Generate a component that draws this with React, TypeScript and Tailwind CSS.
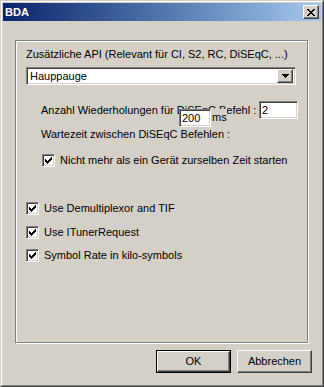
import React from 'react';

const raised =
  'border border-t-white border-l-white border-b-[#404040] border-r-[#404040] shadow-[inset_-1px_-1px_0_#808080]';
const sunken =
  'border border-t-[#808080] border-l-[#808080] border-b-white border-r-white shadow-[inset_1px_1px_0_#404040,inset_-1px_-1px_0_#d4d0c8]';

// pixel bitmaps for the classic glyphs
const checkRows = ['......#', '.....##', '#...###', '##.###.', '#####..', '.###...', '..#....'];
const closeRows = ['##....##', '.##..##.', '..####..', '...##...', '..####..', '.##..##.', '##....##'];

function Bitmap({ rows }: { rows: string[] }) {
  const w = rows[0].length;
  const h = rows.length;
  return (
    <svg width={w} height={h} viewBox={`0 0 ${w} ${h}`} shapeRendering="crispEdges">
      {rows.map((r, y) =>
        r.split('').map((c, x) => (c === '#' ? <rect key={`${x}-${y}`} x={x} y={y} width="1" height="1" fill="#000" /> : null))
      )}
    </svg>
  );
}

function CheckBox({ label, className = '' }: { label: string; className?: string }) {
  return (
    <div className={`flex items-center h-[13px] ${className}`}>
      <div className={`w-[13px] h-[13px] bg-white shrink-0 flex items-center justify-center ${sunken}`}>
        <Bitmap rows={checkRows} />
      </div>
      <span className="ml-[5px] leading-[13px] whitespace-nowrap">{label}</span>
    </div>
  );
}

function Button({ label, isDefault = false }: { label: string; isDefault?: boolean }) {
  const inner = (
    <div className={`w-full h-full flex items-center justify-center ${raised}`}>
      <span className="leading-[13px]">{label}</span>
    </div>
  );
  if (isDefault) {
    return <div className="w-[75px] h-[23px] border border-black">{inner}</div>;
  }
  return <div className="w-[75px] h-[23px]">{inner}</div>;
}

export default function App() {
  return (
    <div
      className="w-[324px] h-[387px] bg-[#d4d0c8] text-black text-[11px] flex flex-col border border-t-[#d4d0c8] border-l-[#d4d0c8] border-b-[#404040] border-r-[#404040]"
      style={{ fontFamily: '"Liberation Sans", Arial, sans-serif' }}
    >
      <div className="flex-1 flex flex-col border border-t-white border-l-white border-b-[#808080] border-r-[#808080] p-px">
        {/* title bar */}
        <div className="h-[18px] flex items-center justify-between pl-[2px] pr-[2px] bg-gradient-to-r from-[#0a246a] to-[#a6caf0]">
          <span className="text-white font-bold leading-[13px]">BDA</span>
          <div className={`w-[16px] h-[14px] bg-[#d4d0c8] flex items-center justify-center ${raised}`}>
            <Bitmap rows={closeRows} />
          </div>
        </div>

        {/* group box */}
        <div className="ml-[12px] mt-[19px] w-[293px] h-[303px] border border-[#808080] shadow-[inset_1px_1px_0_#fff,1px_1px_0_#fff] flex flex-col pl-[10px]">
          <div className="mt-[7px] leading-[13px] whitespace-nowrap">
            Zusätzliche API (Relevant für CI, S2, RC, DiSEqC, ...)
          </div>
          <div className={`mt-[6px] w-[270px] h-[18px] bg-white flex items-center justify-between pl-[3px] pr-[2px] ${sunken}`}>
            <span className="leading-[13px]">Hauppauge</span>
            <div className={`w-[16px] h-[14px] bg-[#d4d0c8] flex items-center justify-center ${raised}`}>
              <svg width="7" height="4" viewBox="0 0 7 4" shapeRendering="crispEdges">
                <path d="M0 0h7v1h-1v1h-1v1h-1v1h-1v-1h-1v-1h-1v-1h-1z" fill="#000" />
              </svg>
            </div>
          </div>

          <div className="relative ml-[15px] mt-[16px] flex items-center h-[18px]">
            <span className="leading-[13px] whitespace-nowrap">Anzahl Wiederholungen für DiSEqC Befehl :</span>
            <div className={`ml-auto mr-[9px] w-[39px] h-[18px] bg-white flex items-center pl-[2px] ${sunken}`}>
              <span className="leading-[13px]">2</span>
            </div>
            {/* the delay field sits over the label, as in the original dialog */}
            <div className="absolute left-[138px] top-[8px] flex">
              <div className={`w-[32px] h-[18px] bg-white flex items-center pl-[2px] ${sunken}`}>
                <span className="leading-[13px]">200</span>
              </div>
              <div className="w-[16px] h-[18px] bg-[#d4d0c8] pt-[2px] pl-[1px] leading-[13px] whitespace-nowrap">ms</div>
            </div>
          </div>

          <div className="ml-[15px] mt-[9px] leading-[13px] whitespace-nowrap">
            Wartezeit zwischen DiSEqC Befehlen :
          </div>

          <CheckBox className="ml-[16px] mt-[13px]" label="Nicht mehr als ein Gerät zurselben Zeit starten" />

          <CheckBox className="mt-[35px]" label="Use Demultiplexor and TIF" />
          <CheckBox className="mt-[11px]" label="Use ITunerRequest" />
          <CheckBox className="mt-[10px]" label="Symbol Rate in kilo-symbols" />
        </div>

        {/* buttons */}
        <div className="flex justify-end gap-[6px] mt-[7px] pr-[9px]">
          <Button label="OK" isDefault />
          <Button label="Abbrechen" />
        </div>
      </div>
    </div>
  );
}
